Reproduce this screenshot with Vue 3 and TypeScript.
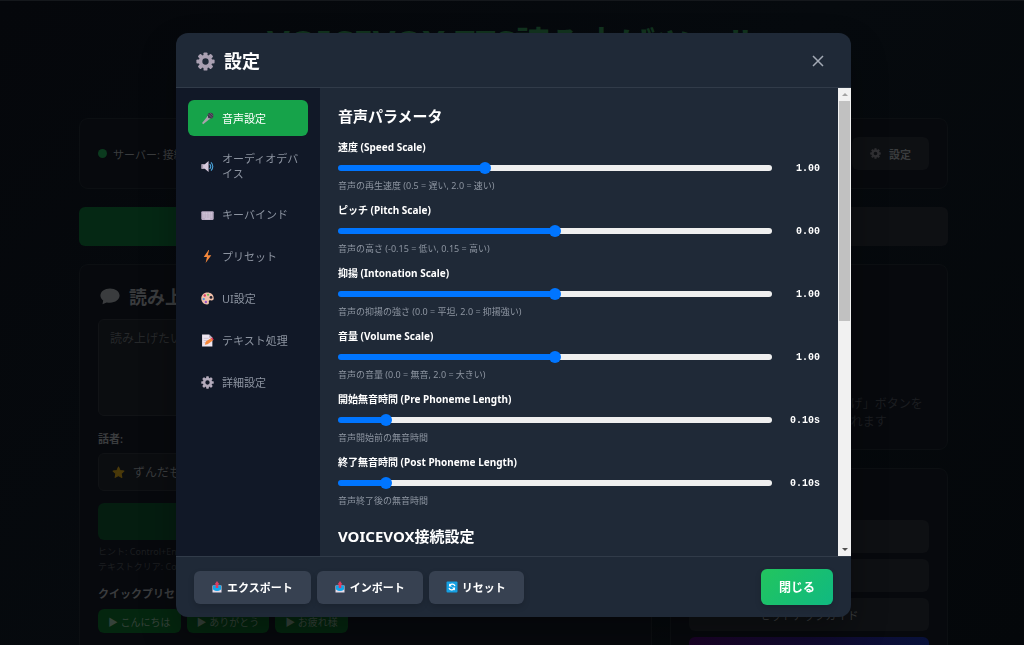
<script setup lang="ts">
import { ref } from 'vue'

interface Param {
  id: string
  label: string
  hint: string
  min: number
  max: number
  step: number
  value: number
  unit: string
}

const tabs = [
  { icon: 'mic', label: '音声設定' },
  { icon: 'speaker', label: 'オーディオデバイス' },
  { icon: 'keyboard', label: 'キーバインド' },
  { icon: 'bolt', label: 'プリセット' },
  { icon: 'palette', label: 'UI設定' },
  { icon: 'memo', label: 'テキスト処理' },
  { icon: 'gear', label: '詳細設定' },
]
const active = ref(0)

const params = ref<Param[]>([
  { id: 'speed', label: '速度 (Speed Scale)', hint: '音声の再生速度 (0.5 = 遅い, 2.0 = 速い)', min: 0.5, max: 2, step: 0.01, value: 1, unit: '' },
  { id: 'pitch', label: 'ピッチ (Pitch Scale)', hint: '音声の高さ (-0.15 = 低い, 0.15 = 高い)', min: -0.15, max: 0.15, step: 0.01, value: 0, unit: '' },
  { id: 'intonation', label: '抑揚 (Intonation Scale)', hint: '音声の抑揚の強さ (0.0 = 平坦, 2.0 = 抑揚強い)', min: 0, max: 2, step: 0.01, value: 1, unit: '' },
  { id: 'volume', label: '音量 (Volume Scale)', hint: '音声の音量 (0.0 = 無音, 2.0 = 大きい)', min: 0, max: 2, step: 0.01, value: 1, unit: '' },
  { id: 'pre', label: '開始無音時間 (Pre Phoneme Length)', hint: '音声開始前の無音時間', min: 0, max: 1, step: 0.01, value: 0.1, unit: 's' },
  { id: 'post', label: '終了無音時間 (Post Phoneme Length)', hint: '音声終了後の無音時間', min: 0, max: 1, step: 0.01, value: 0.1, unit: 's' },
])

const ratio = (p: Param) => (p.value - p.min) / (p.max - p.min)
const presets = ['こんにちは', 'ありがとう', 'お疲れ様']
</script>

<template>
  <svg class="sprite" aria-hidden="true">
    <symbol id="gear" viewBox="0 0 24 24">
      <g fill="currentColor">
        <rect v-for="a in 8" :key="a" x="9.500" y="0.500" width="5" height="5.500" rx="1.200" :transform="`rotate(${a * 45} 12 12)`" />
      </g>
      <circle cx="12" cy="12" r="6.300" fill="none" stroke="currentColor" stroke-width="4.600" />
    </symbol>
    <symbol id="mic" viewBox="0 0 24 24">
      <path d="M2 20.500 12 8l4.500 4.500L4 22.500Z" fill="#aaa3ad" />
      <path d="m11 8.500 5 5 1.500-1.500-5-5Z" fill="#d9cfdf" />
      <circle cx="17.500" cy="6.800" r="5.300" fill="#40384c" />
      <path d="m14 4 6.500 6.500M17 2l5 5" stroke="#8a8194" stroke-width="1" />
    </symbol>
    <symbol id="speaker" viewBox="0 0 24 24">
      <path d="M1 8h6l7-6v20l-7-6H1Z" fill="#d5c8dc" />
      <path d="M1 8h3v8H1Z" fill="#a99caf" />
      <path d="M16.500 8q3 4 0 8M19 5q5.500 7 0 14" fill="none" stroke="#4aa3da" stroke-width="2" stroke-linecap="round" />
    </symbol>
    <symbol id="keyboard" viewBox="0 0 24 24">
      <rect x="0.500" y="6" width="23" height="16" rx="2" fill="#b9abc3" />
      <path d="M3 9.500h18M3 13h18M3 16.500h18" stroke="#d8cfe0" stroke-width="2" stroke-dasharray="2 1" />
      <path d="M7 20h10" stroke="#d8cfe0" stroke-width="1.500" />
    </symbol>
    <symbol id="bolt" viewBox="0 0 24 24">
      <path d="M14 0 5 13h6L8.500 24 19 9.500h-6.500L15 0Z" fill="#f5873a" />
    </symbol>
    <symbol id="palette" viewBox="0 0 24 24">
      <path d="M12 1C5 1 0.500 6 0.500 12S5 23 11 23c4 0 4-2.500 3.500-4.500-.5-2.500 1-3.500 4-3 3 .500 5-1 5-4C23.500 5 18 1 12 1Z" fill="#f0bfa9" />
      <circle cx="7" cy="6.500" r="2.200" fill="#df3c66" /><circle cx="13" cy="5" r="2" fill="#6bbd5a" />
      <circle cx="5" cy="13" r="2.100" fill="#4b93e0" /><circle cx="9" cy="18.500" r="2.200" fill="#9753c4" />
      <circle cx="18.500" cy="10" r="2.600" fill="#25202d" />
    </symbol>
    <symbol id="memo" viewBox="0 0 24 24">
      <path d="M2 1h13l6 6v16H2Z" fill="#eee5f0" /><path d="M15 1v6h6Z" fill="#b8aac0" />
      <path d="M5 8h9M5 12h8M5 16h5" stroke="#b8aac0" stroke-width="1" />
      <path d="m7 20 2-6L18 8l4 4-10 7Z" fill="#f5873a" /><path d="m18 8 3-1.500 2.500 4-1.500 1.500Z" fill="#e23856" />
    </symbol>
    <symbol id="outbox" viewBox="0 0 24 24">
      <path d="M3 9h18v14H3Z" fill="#e4dbe9" /><path d="M4 9h16v8q-8 6-16 0Z" fill="#13a5ea" />
      <path d="M9.500 14V7H7l5-7 5 7h-2.500v7Z" fill="#dc3e62" />
    </symbol>
    <symbol id="reset" viewBox="0 0 24 24">
      <rect x="1" y="1" width="22" height="22" rx="2" fill="#15a0e3" />
      <path d="M18 10a6 6 0 0 0-10-2M6 14a6 6 0 0 0 10 2" fill="none" stroke="#fff" stroke-width="2.400" />
      <path d="M6 5v6h6ZM18 19v-6h-6Z" fill="#fff" />
    </symbol>
    <symbol id="bubble" viewBox="0 0 24 24">
      <path d="M12 3C5.500 3 .5 6.800.5 11.500c0 2.500 1.400 4.500 3.300 6L3 22l5-2.300c1.200.3 2.600.4 4 .4 6.500 0 11.500-3.900 11.500-8.600S18.500 3 12 3Z" fill="currentColor" />
    </symbol>
    <symbol id="star" viewBox="0 0 24 24">
      <path d="m12 2 3 6.500 7 .8-5.200 4.800 1.400 7L12 17.600 5.800 21l1.400-7L2 9.300l7-.8Z" fill="currentColor" stroke="currentColor" stroke-width="2" stroke-linejoin="round" />
    </symbol>
  </svg>

  <div class="page" inert>
    <h1>VOICEVOX TTS読み上げツール</h1>
    <section class="card status">
      <span class="dot"></span><span>サーバー: 接続済み</span>
      <button class="dim-btn settings"><svg><use href="#gear" /></svg>設定</button>
    </section>
    <div class="modes">
      <button class="mode on"></button>
      <button class="mode"></button>
    </div>
    <div class="columns">
      <section class="card">
        <h2><svg><use href="#bubble" /></svg>読み上げテキスト</h2>
        <textarea aria-label="テキスト" placeholder="読み上げたいテキストを入力"></textarea>
        <p class="field-label">話者:</p>
        <button class="voice"><svg><use href="#star" /></svg>ずんだもん</button>
        <button class="speak"></button>
        <p class="tip">ヒント: Control+Enter で読み上げ<br />テキストクリア: Control+L</p>
        <p class="quick-label">クイックプリセット:</p>
        <div class="quick">
          <button v-for="p in presets" :key="p">▶ {{ p }}</button>
        </div>
      </section>
      <div class="side">
        <section class="card history">
          <p>テキストを入力して「読み上げ」ボタンを<br />押すと、履歴が表示されます</p>
        </section>
        <section class="card tools">
          <button class="dim-btn">VOICEVOX確認</button>
          <button class="dim-btn"></button>
          <button class="dim-btn">セットアップガイド</button>
          <button class="dim-btn purple"></button>
        </section>
      </div>
    </div>
  </div>

  <div class="overlay">
    <div class="modal" role="dialog" aria-labelledby="modal-title">
      <header>
        <h2 id="modal-title"><svg><use href="#gear" /></svg>設定</h2>
        <button class="x" aria-label="閉じる">
          <svg viewBox="0 0 12 12"><path d="M1 1l10 10M11 1 1 11" stroke="currentColor" stroke-width="1.500" /></svg>
        </button>
      </header>
      <div class="body">
        <nav>
          <button v-for="(t, i) in tabs" :key="t.icon" :class="{ active: i === active }" @click="active = i">
            <svg><use :href="'#' + t.icon" /></svg><span>{{ t.label }}</span>
          </button>
        </nav>
        <main>
          <h3>音声パラメータ</h3>
          <div v-for="p in params" :key="p.id" class="param">
            <label :for="p.id">{{ p.label }}</label>
            <div class="row">
              <input :id="p.id" v-model.number="p.value" type="range" :min="p.min" :max="p.max" :step="p.step" :style="{ '--ratio': ratio(p) }" />
              <output :for="p.id">{{ p.value.toFixed(2) }}{{ p.unit }}</output>
            </div>
            <p>{{ p.hint }}</p>
          </div>
          <h3 class="next">VOICEVOX接続設定</h3>
        </main>
        <div class="scrollbar" aria-hidden="true">
          <i class="up"></i><i class="thumb"></i><i class="down"></i>
        </div>
      </div>
      <footer>
        <button><svg><use href="#outbox" /></svg>エクスポート</button>
        <button><svg><use href="#outbox" /></svg>インポート</button>
        <button><svg><use href="#reset" /></svg>リセット</button>
        <button class="close">閉じる</button>
      </footer>
    </div>
  </div>
</template>

<style>
body {
  margin: 0;
  background: #05070b;
  font-family: "Noto Sans", "Noto Sans CJK JP", sans-serif;
}
</style>

<style scoped>
* { box-sizing: border-box; }
h1, h2, h3, p { margin: 0; }
button { font: inherit; border: 0; padding: 0; cursor: pointer; color: inherit; }
.sprite { display: block; width: 0; height: 0; }

.page {
  height: 100vh;
  overflow: hidden;
  padding: 0 76px 0 79px;
  border-top: 1px solid #15181c;
  background: linear-gradient(135deg, #05070b, #060a0e 50%, #04070a);
  color: #3a3c3e;
  font-size: 11px;
}
h1 {
  height: 117px;
  padding-top: 18px;
  text-align: center;
  font-size: 35px;
  line-height: 50px;
  white-space: nowrap;
  color: #12331f;
}
.card {
  background: #07090d;
  border: 1px solid #0c0f12;
  border-radius: 9px;
  padding: 18px;
}
.status { display: flex; align-items: center; gap: 6px; height: 71px; }
.dot { width: 9px; height: 9px; border-radius: 50%; background: #0b3a1e; }
.dim-btn { background: #0e1013; border-radius: 6px; height: 33px; font-size: 11px; font-weight: 600; }
.settings { margin-left: auto; width: 77px; display: flex; align-items: center; justify-content: center; gap: 8px; }
.settings svg { width: 11px; height: 11px; color: #303033; }
.modes { display: grid; grid-template-columns: 1fr 1fr; gap: 6px; margin: 18px 0; }
.mode { height: 39px; border-radius: 6px; background: #0e1013; }
.mode.on { background: #052814; }
.columns { display: grid; grid-template-columns: 1fr 278px; gap: 18px; }
.columns > .card { height: 400px; }
.columns h2 { display: flex; align-items: center; gap: 9px; height: 26px; margin: 0 0 10px 2px; font-size: 18px; }
.columns h2 svg { width: 20px; height: 20px; }
textarea {
  display: block; width: 100%; height: 97px; padding: 10px 11px; resize: none;
  background: #0b0d10; border: 1px solid #111316; border-radius: 6px;
  font: 12px/17px "Noto Sans", "Noto Sans CJK JP", sans-serif;
}
textarea::placeholder { color: #26282a; }
.field-label { margin: 15px 0 6px; line-height: 16px; font-weight: 600; }
.voice {
  display: flex; align-items: center; gap: 8px; width: 100%; height: 38px; padding: 0 13px;
  background: #0b0d10; border: 1px solid #101215; border-radius: 6px; font-size: 12px;
}
.voice svg { width: 13px; height: 13px; color: #4a390a; }
.speak { display: block; width: 100%; height: 37px; margin-top: 12px; background: #051d10; border-radius: 6px; }
.tip { margin-top: 4px; font-size: 9px; line-height: 15px; color: #1c1e20; }
.quick-label { margin: 12px 0 7px; line-height: 16px; font-weight: 600; }
.quick { display: flex; gap: 6px; }
.quick button { height: 24px; padding: 0 10px; background: #04260f; border-radius: 6px; color: #35423a; font-size: 10px; white-space: nowrap; }
.side { display: flex; flex-direction: column; gap: 18px; }
.history { height: 186px; padding: 130px 0 0; text-align: center; font-size: 12px; line-height: 18px; color: #1b1d20; white-space: nowrap; }
.tools { display: flex; flex-direction: column; gap: 6px; height: 260px; padding-top: 51px; }
.tools .dim-btn { flex: none; font-weight: 400; }
.tools .purple { background: linear-gradient(90deg, #1b0328, #08113a); }

.overlay {
  position: fixed; inset: 0; display: flex; align-items: center; justify-content: center;
  padding: 33px 24px 28px 27px;
}
.modal {
  display: flex; flex-direction: column; width: 100%; max-width: 675px; height: 100%;
  overflow: hidden; border-radius: 12px; background: #1f2937; color: #fff;
  box-shadow: 0 18px 36px rgba(0, 0, 0, 0.3);
}
header {
  flex: none; display: flex; align-items: center; justify-content: space-between;
  height: 55px; padding: 2px 24px 0 20px; border-bottom: 1px solid #313b49;
}
header h2 { display: flex; align-items: center; gap: 9px; font-size: 18px; line-height: 26px; }
header h2 svg { width: 19px; height: 19px; color: #aaa0b2; }
.x { display: flex; padding: 3px; background: none; color: #a3aab5; }
.x svg { width: 12px; height: 12px; }
.body { flex: 1; min-height: 0; display: flex; }
nav { flex: none; display: flex; flex-direction: column; gap: 6px; width: 144px; padding: 12px; background: #111827; }
nav button {
  display: flex; align-items: center; gap: 8px; min-height: 36px; padding: 9px 9px 9px 13px;
  border-radius: 6px; background: none; color: #8c93a0; font-size: 11px; line-height: 15px; text-align: left;
}
nav button.active { background: #16a34a; color: #fff; }
nav svg { flex: none; width: 13px; height: 13px; color: #b3aabb; }
main { flex: 1; min-width: 0; overflow: hidden; padding: 18px 18px 0; }
h3 { font-size: 15px; line-height: 21px; margin-bottom: 12px; }
.next { padding-top: 9px; }
.param { height: 63px; }
.param label { display: block; font-size: 10px; line-height: 17px; font-weight: 700; }
.row { display: flex; align-items: center; gap: 12px; height: 24px; }
.param p { font-size: 9px; line-height: 11px; color: #8d95a1; }
output { width: 36px; text-align: right; font: bold 10px "Liberation Mono", monospace; }
input[type="range"] {
  flex: 1; min-width: 0; height: 6px; margin: 0; appearance: none; border-radius: 3px;
  background: linear-gradient(90deg, #0075ff calc(6px + (100% - 11px) * var(--ratio)), #efefef 0);
}
input[type="range"]::-webkit-slider-thumb { appearance: none; width: 12px; height: 12px; border-radius: 50%; background: #0075ff; }
.scrollbar { flex: none; display: flex; flex-direction: column; align-items: center; width: 13px; background: #f1f1f1; }
.up, .down { flex: none; width: 100%; height: 13px; display: grid; place-items: center; }
.up::before, .down::before { content: ""; border: 3px solid transparent; }
.up::before { border-bottom-color: #a3a3a3; border-top: 0; }
.down::before { border-top-color: #505050; border-bottom: 0; }
.thumb { width: 11px; height: 47%; margin-bottom: auto; background: #c1c1c1; }
footer {
  flex: none; display: flex; align-items: center; gap: 6px; height: 61px; padding: 0 18px;
  border-top: 1px solid #313b49;
}
footer button {
  display: flex; align-items: center; gap: 4px; height: 33px; padding: 0 18px 0 17px; border-radius: 6px;
  background: #374151; font-size: 11px; font-weight: 700; box-shadow: 0 3px 6px rgba(0, 0, 0, 0.15);
}
footer svg { width: 12px; height: 12px; }
footer .close { height: 36px; padding: 0 18px; margin-left: auto; font-size: 12px; background: linear-gradient(135deg, #22c55e, #10b981); }
</style>
